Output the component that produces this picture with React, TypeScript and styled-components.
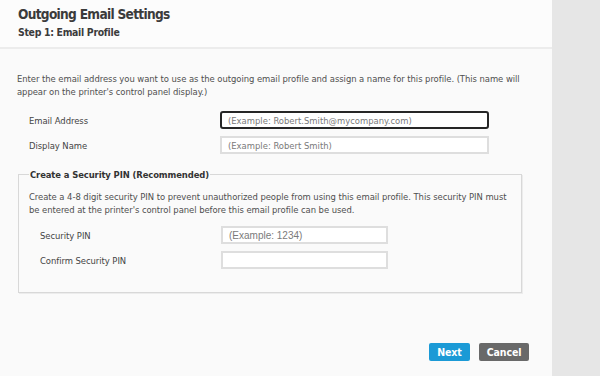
import * as React from 'react';
import styled, { createGlobalStyle } from 'styled-components';

const GlobalStyle = createGlobalStyle`
  html, body {
    margin: 0;
    padding: 0;
    background: #fafafa;
  }
  * {
    box-sizing: border-box;
  }
`;

// narrow humanist stand-in for the printer's HP font
const HP_FONT = `'DejaVu Sans Condensed', 'Liberation Sans', sans-serif`;

const Page = styled.div`
  display: flex;
  width: 600px;
  height: 376px;
  font-family: ${HP_FONT};
  color: #4a4a4a;
`;

const Main = styled.main`
  flex: 1;
  display: flex;
  flex-direction: column;
  background: #fafafa;
`;

const Sidebar = styled.aside`
  width: 48px;
  background: #e6e6e6;
`;

const Header = styled.header`
  height: 49px;
  padding: 5px 18px 0;
  border-bottom: 2px solid #ececec;
  background: #fcfcfc;
`;

const Title = styled.h1`
  margin: 0;
  font-size: 13.6px;
  line-height: 19px;
  font-weight: 700;
  letter-spacing: -0.7px;
  color: #3b3b3b;
`;

const Subtitle = styled.h2`
  margin: 0;
  font-size: 10.4px;
  line-height: 17px;
  font-weight: 700;
  letter-spacing: -0.3px;
  color: #3b3b3b;
`;

const Content = styled.section`
  padding: 23px 17px 0;
`;

const Paragraph = styled.p<{ $top?: number; $bottom?: number }>`
  margin: ${p => p.$top ?? 0}px 0 ${p => p.$bottom ?? 13}px;
  font-size: 9.4px;
  line-height: 13px;
  letter-spacing: -0.05px;
  color: #4f4f4f;
`;

const Row = styled.div<{ $indent: number; $labelWidth: number }>`
  display: grid;
  grid-template-columns: ${p => p.$labelWidth}px auto;
  align-items: center;
  padding-left: ${p => p.$indent}px;
  margin-bottom: 7px;
`;

const Label = styled.label`
  font-size: 9.4px;
  letter-spacing: -0.05px;
  color: #444;
`;

const Input = styled.input<{ $width: number; $focused?: boolean; $plain?: boolean }>`
  width: ${p => p.$width}px;
  height: 18px;
  padding: 0 6px;
  border: ${p => (p.$focused ? '2px solid #262626' : '2px solid #dedede')};
  border-radius: ${p => (p.$focused ? '3px' : '0')};
  background: #fff;
  font-family: ${p => (p.$plain ? `'Liberation Sans', Arial, sans-serif` : HP_FONT)};
  font-size: ${p => (p.$plain ? '10px' : '9.4px')};
  color: #333;
  outline: none;

  &::placeholder {
    color: #7a7a7a;
  }
`;

const Fieldset = styled.fieldset`
  margin: 15px 13px 0 1px;
  padding: 6px 10px 16px;
  border: 1px solid #d8d8d8;
  box-shadow: 1px 1px 0 #ececec;
`;

const Legend = styled.legend`
  padding: 0 1px;
  font-size: 9.4px;
  font-weight: 700;
  letter-spacing: -0.1px;
  color: #333;
`;

const Footer = styled.footer`
  margin-top: auto;
  display: flex;
  justify-content: flex-end;
  gap: 9px;
  padding: 0 23px 15px;
`;

const Button = styled.button<{ $primary?: boolean; $width: number }>`
  width: ${p => p.$width}px;
  height: 18px;
  padding: 0;
  border: none;
  border-radius: 2px;
  background: ${p => (p.$primary ? '#1b9ad6' : '#696969')};
  color: #fff;
  font-family: ${HP_FONT};
  font-size: 10.5px;
  font-weight: 700;
  letter-spacing: -0.1px;
`;

const App: React.FC = () => {
  return (
    <>
      <GlobalStyle />
      <Page>
        <Main>
          <Header>
            <Title>Outgoing Email Settings</Title>
            <Subtitle>Step 1: Email Profile</Subtitle>
          </Header>
          <Content>
            <Paragraph>
              Enter the email address you want to use as the outgoing email profile and assign a name for this
              profile. (This name will appear on the printer's control panel display.)
            </Paragraph>
            <Row $indent={12} $labelWidth={191}>
              <Label>Email Address</Label>
              <Input $width={269} $focused placeholder="(Example: Robert.Smith@mycompany.com)" />
            </Row>
            <Row $indent={12} $labelWidth={191}>
              <Label>Display Name</Label>
              <Input $width={269} placeholder="(Example: Robert Smith)" />
            </Row>
            <Fieldset>
              <Legend>Create a Security PIN (Recommended)</Legend>
              <Paragraph $top={4} $bottom={10}>
                Create a 4-8 digit security PIN to prevent unauthorized people from using this email profile. This
                security PIN must be entered at the printer's control panel before this email profile can be used.
              </Paragraph>
              <Row $indent={11} $labelWidth={181}>
                <Label>Security PIN</Label>
                <Input $width={167} $plain placeholder="(Example: 1234)" />
              </Row>
              <Row $indent={11} $labelWidth={181}>
                <Label>Confirm Security PIN</Label>
                <Input $width={167} $plain type="password" />
              </Row>
            </Fieldset>
          </Content>
          <Footer>
            <Button $primary $width={41}>Next</Button>
            <Button $width={50}>Cancel</Button>
          </Footer>
        </Main>
        <Sidebar />
      </Page>
    </>
  );
};

export default App;
